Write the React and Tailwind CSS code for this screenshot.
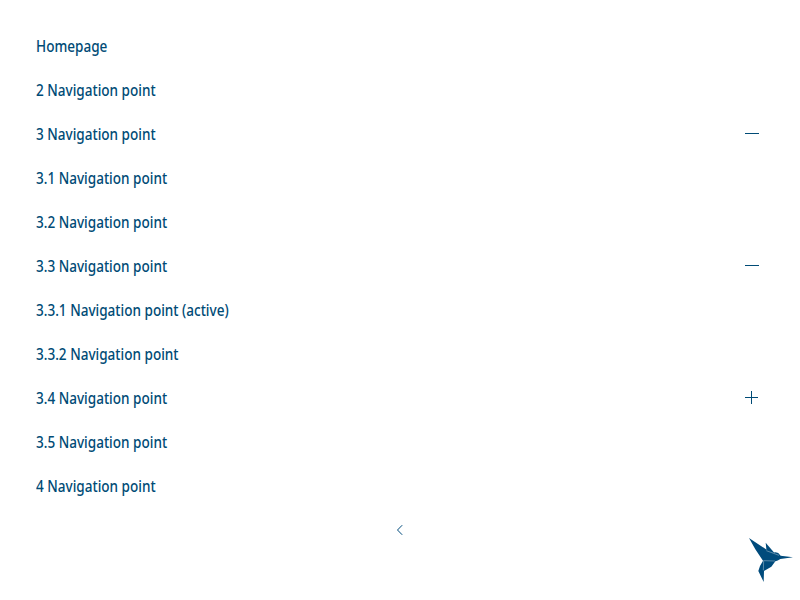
const items = [
  { label: 'Homepage' },
  { label: '2 Navigation point' },
  { label: '3 Navigation point', icon: 'minus' },
  { label: '3.1 Navigation point' },
  { label: '3.2 Navigation point' },
  { label: '3.3 Navigation point', icon: 'minus' },
  { label: '3.3.1 Navigation point (active)' },
  { label: '3.3.2 Navigation point' },
  { label: '3.4 Navigation point', icon: 'plus' },
  { label: '3.5 Navigation point' },
  { label: '4 Navigation point' },
];

function Toggle({ type }) {
  return (
    <svg className="mb-0.5" width="14" height="14" viewBox="0 0 14 14" shapeRendering="crispEdges" fill="#004b76">
      {type === 'plus' ? <path d="M0 7h13v1H0zM6 1h1v13H6z" /> : <path d="M0 7h14v1H0z" />}
    </svg>
  );
}

function Bird() {
  return (
    <svg width="60" height="60" viewBox="0 0 180 180">
      <g fill="#004b7c">
        <path d="M27 24 L80 59 L105 71 L107 93 L69 92 L46 58 Z" />
        <path d="M77 38 L104 70 L80 66 Z" />
        <path d="M80 62 L98 69 Q112 62 122 77 L159 82 L121 87 Q113 92 106 94 L94 110 L72 123 L71 156 L55 123 L60 108 L70 91 Z" />
      </g>
      <path d="M79 62 L117 76 M71 92 L105 93 M71 92 L70 121" stroke="white" strokeOpacity="0.7" strokeWidth="1.5" fill="none" />
    </svg>
  );
}

export default function App() {
  return (
    <div className="flex h-[600px] w-[800px] flex-col bg-white pt-6 font-['Noto_Sans',sans-serif] text-[#004b76]">
      <nav>
        <ul>
          {items.map((item) => (
            <li key={item.label} className="flex h-11 items-center justify-between pl-9 pr-[41px]">
              <a className="origin-left scale-x-[0.874] whitespace-nowrap text-[15.5px] leading-5 font-medium">{item.label}</a>
              {item.icon && <Toggle type={item.icon} />}
            </li>
          ))}
        </ul>
      </nav>
      <div className="flex h-7 items-end justify-center">
        <svg width="8" height="12" viewBox="0 0 8 12" fill="none" stroke="#004b7c" strokeWidth="1">
          <path d="M6.2 1.2 L1.5 6 L6.2 10.8" />
        </svg>
      </div>
      <div className="-mt-1.5 flex justify-end">
        <Bird />
      </div>
    </div>
  );
}
